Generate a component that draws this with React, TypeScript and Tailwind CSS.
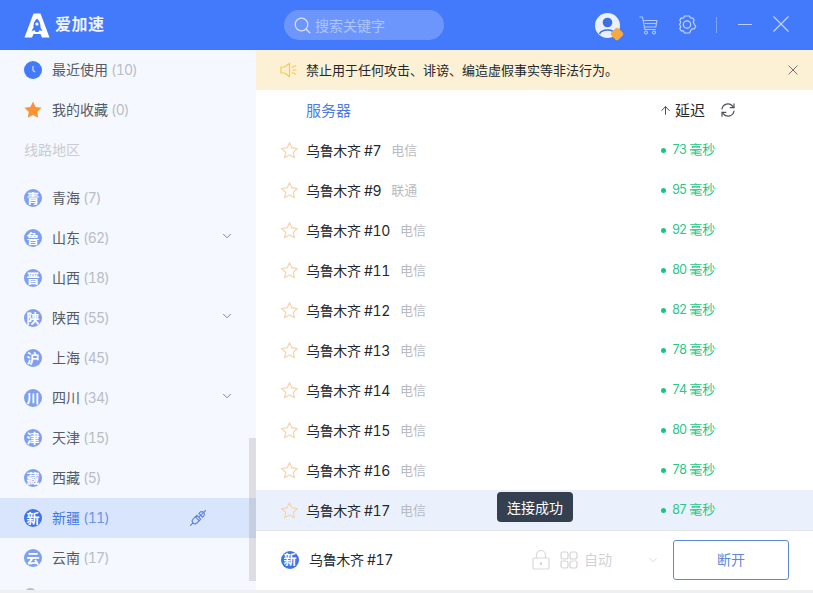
import React from "react";
import { ChevronDown, ArrowUp } from "lucide-react";

const FONT = "font-['Inter','Noto_Sans_CJK_SC',sans-serif]";

function Badge({ ch, active }: { ch: string; active?: boolean }) {
  return (
    <span className={`flex h-[18px] w-[18px] shrink-0 items-center justify-center rounded-full text-[13px] leading-none font-bold text-white ${active ? "bg-[#3f73e8]" : "bg-[#7f9ff0]"}`}>
      {ch}
    </span>
  );
}

function Region({ ch, name, n, chev, active }: { ch: string; name: string; n: number; chev?: boolean; active?: boolean }) {
  return (
    <div className={`flex h-10 items-center pl-6 pr-[22px] ${active ? "bg-[#d9e5fd]" : ""}`}>
      <Badge ch={ch} active={active} />
      <span className={`ml-[10px] -translate-y-px text-[14px] ${active ? "text-[#4277e6]" : "text-[#555b66]"}`}>{name}</span>
      <span className={`ml-[3px] -translate-y-px text-[14px] tabular-nums tracking-[-0.8px] ${active ? "text-[#6d93e8]" : "text-[#b9bdc6]"}`}>({n})</span>
      <div className="flex-1" />
      {chev && <ChevronDown className="h-[14px] w-[14px] -translate-y-[2px] text-[#6c7280]" strokeWidth={1.5} />}
      {active && (
        <svg viewBox="0 0 16 16" className="mr-[28px] h-[16px] w-[16px] text-[#5b83e0]" fill="none" stroke="currentColor" strokeWidth="1.100" strokeLinecap="round">
          <path d="M.500 15.500l2.300-2.300M15.500.500l-2.300 2.300" />
          <path d="M6.800 5.300 3 9.100a2.900 2.900 0 0 0 0 3.900 2.900 2.900 0 0 0 3.900 0l3.800-3.800Z" />
          <path d="M9.200 6.900l3.800-3.800M5.300 6.800 9.200 10.700" />
          <path d="M8.900 3.400l1-1a2.500 2.500 0 0 1 3.700 0 2.500 2.500 0 0 1 0 3.700l-1 1Z" />
        </svg>
      )}
    </div>
  );
}

function Star() {
  return (
    <svg viewBox="0 0 20 20" className="h-[19px] w-[19px] shrink-0" fill="none" stroke="#f6d3a8" strokeWidth="1.2">
      <path d="M10 1.800l2.500 5.400 5.800.700-4.300 4 1.200 5.800L10 14.800l-5.200 2.900L6 11.900l-4.300-4 5.800-.700Z" strokeLinejoin="round" />
    </svg>
  );
}

function Row({ n, isp, ms, active }: { n: number; isp: string; ms: number; active?: boolean }) {
  return (
    <div className={`flex h-10 items-center pl-6 ${active ? "bg-[#eaf1fd]" : ""}`}>
      <Star />
      <span className="ml-[7px] text-[14px] tabular-nums tracking-[-0.35px] text-[#23272e]">乌鲁木齐 #{n}</span>
      <span className="ml-[10px] translate-y-px text-[13px] text-[#b8bbc2]">{isp}</span>
      <div className="flex-1" />
      <div className="flex w-[152px] items-center text-[13px] text-[#2bc78a]">
        <span className="mr-[6px] h-[5px] w-[5px] rounded-full bg-[#17c67f]" />
        <span className="text-[12.500px] tabular-nums tracking-[-1px]">{ms}</span>
        <span className="ml-[3px]">毫秒</span>
      </div>
    </div>
  );
}

const regions = [
  { ch: "青", name: "青海", n: 7 },
  { ch: "鲁", name: "山东", n: 62, chev: true },
  { ch: "晋", name: "山西", n: 18 },
  { ch: "陕", name: "陕西", n: 55, chev: true },
  { ch: "沪", name: "上海", n: 45 },
  { ch: "川", name: "四川", n: 34, chev: true },
  { ch: "津", name: "天津", n: 15 },
  { ch: "藏", name: "西藏", n: 5 },
  { ch: "新", name: "新疆", n: 11, active: true },
  { ch: "云", name: "云南", n: 17 },
];

const rows = [
  { n: 7, isp: "电信", ms: 73 },
  { n: 9, isp: "联通", ms: 95 },
  { n: 10, isp: "电信", ms: 92 },
  { n: 11, isp: "电信", ms: 80 },
  { n: 12, isp: "电信", ms: 82 },
  { n: 13, isp: "电信", ms: 78 },
  { n: 14, isp: "电信", ms: 74 },
  { n: 15, isp: "电信", ms: 80 },
  { n: 16, isp: "电信", ms: 78 },
  { n: 17, isp: "电信", ms: 87, active: true },
];

export default function App() {
  return (
    <div className={`flex h-[593px] w-[813px] flex-col overflow-hidden bg-[#eeeff1] ${FONT}`}>
      {/* header */}
      <header className="flex h-[50px] shrink-0 items-center bg-[#437afc] text-white">
        <div className="flex w-[284px] items-center pl-6">
          <svg viewBox="0 0 26 25" className="h-[25px] w-[26px]">
            <path fill="white" d="M9.500.5h7L25.500 24.500h-7.500L16.500 21h-7L8 24.500H.5Z" />
            <path fill="#437afc" d="M13 5.500c2.800 2.500 3.800 6 3.500 9l2 3.500-3.300-.800L14.500 19h-3l-.700-1.800L7.500 18l2-3.500c-.300-3 .700-6.500 3.500-9Z" />
            <circle cx="13" cy="11" r="1.600" fill="white" />
          </svg>
          <span className="ml-[5px] -translate-y-px text-[16px] font-bold tracking-[0.5px] text-[#eef3ff]">爱加速</span>
        </div>
        <div className="flex h-[30px] w-[160px] items-center rounded-full bg-[#6c96fc] pl-[10px]">
          <svg viewBox="0 0 17 17" className="h-[17px] w-[17px]" fill="none" stroke="#d5e1ff" strokeWidth="1.300" strokeLinecap="round">
            <circle cx="7.500" cy="7.500" r="6.300" />
            <path d="M12.200 12.200 15.800 15.800" />
          </svg>
          <span className="ml-[4px] text-[14px] text-[#aec5fe]">搜索关键字</span>
        </div>
        <div className="flex-1" />
        <div className="relative h-[25px] w-[25px] rounded-full bg-[#eaf0fe]">
          <svg viewBox="0 0 25 25" className="h-[25px] w-[25px]">
            <circle cx="12.500" cy="9.500" r="4.800" fill="#3f6fe0" />
            <path d="M4.500 21c2-5.500 14-5.500 16 0" fill="none" stroke="#3f6fe0" strokeWidth="1.500" />
          </svg>
          <span className="absolute -bottom-[1px] -right-[2px] h-[10px] w-[10px] rotate-45 rounded-[2px] bg-[#f7a941]" />
        </div>
        <svg viewBox="0 0 19 19" className="ml-[19px] h-[19px] w-[19px]" fill="none" stroke="#b3c9fe" strokeWidth="1.100" strokeLinejoin="round">
          <path d="M.5 1h3l2.300 12.500h11" />
          <path d="M4 4.500h14l-1.200 6.500H5.200" />
          <path d="M5.500 7.500h12" />
          <circle cx="7" cy="16.500" r="1.500" />
          <circle cx="15" cy="16.500" r="1.500" />
        </svg>
        <svg viewBox="0 0 20 20" className="ml-[19px] h-[20px] w-[20px]" fill="none" stroke="#c3d4fe" strokeWidth="1.200" strokeLinejoin="round">
          <path d="M7.500 1.500h5l1 2 2.400.200 1.300 2-1 2L17.500 10l1.200 2-1.300 2.300-2.400.1-1.500 2-1 2.100h-5l-1-2.100-2.400-.1L2.800 14l1-2L2.500 10l1.300-2.300-1-2 1.300-2 2.400-.2Z" transform="translate(0 -.500)" />
          <circle cx="10" cy="9.500" r="3.700" />
        </svg>
        <span className="ml-[19px] h-[16px] w-px bg-[#7fa4fc]" />
        <span className="ml-[21px] mb-[2px] h-px w-[14px] bg-[#b9cffe]" />
        <svg viewBox="0 0 16 16" className="ml-[21px] mr-[24px] h-[16px] w-[16px] -translate-y-[1px]" fill="none" stroke="#c6d7fe" strokeWidth="1.100">
          <path d="M.5.500l15 15M15.500.500l-15 15" />
        </svg>
      </header>

      <div className="flex h-[540px] shrink-0">
        {/* sidebar */}
        <aside className="relative w-[256px] shrink-0 overflow-hidden bg-[#f5f8fe]">
          <div className="flex h-10 items-center pl-6">
            <span className="flex h-[18px] w-[18px] items-center justify-center rounded-full bg-[#437afc]">
              <svg viewBox="0 0 18 18" className="h-[18px] w-[18px]" fill="none" stroke="#cfdcff" strokeWidth="1.200">
                <path d="M9 5v4.500l2 1.500" />
              </svg>
            </span>
            <span className="ml-[10px] -translate-y-px text-[14px] text-[#555b66]">最近使用</span>
            <span className="ml-[3px] -translate-y-px text-[14px] tabular-nums tracking-[-0.8px] text-[#b9bdc6]">(10)</span>
          </div>
          <div className="flex h-10 items-center pl-6">
            <svg viewBox="0 0 18 18" className="h-[18px] w-[18px]" fill="#fb9334">
              <path d="M9 .500l2.600 5.500 6 .800-4.400 4.100 1.100 5.900L9 13.900l-5.300 2.900 1.100-5.900L.400 6.800l6-.800Z" />
            </svg>
            <span className="ml-[10px] -translate-y-px text-[14px] text-[#555b66]">我的收藏</span>
            <span className="ml-[3px] -translate-y-px text-[14px] tabular-nums tracking-[-0.8px] text-[#b9bdc6]">(0)</span>
          </div>
          <div className="flex h-10 -translate-y-px items-center pl-6 text-[14px] text-[#c9ccd3]">线路地区</div>
          <div className="h-2" />
          {regions.map((r) => (
            <Region key={r.name} {...r} />
          ))}
          <div className="pl-6 pt-[10px]">
            <span className="block h-[18px] w-[13px] rounded-full bg-[#b9bdc6]" />
          </div>
          <div className="absolute right-0 top-[388px] h-[143px] w-[7px] bg-[#777]/20" />
        </aside>

        {/* main */}
        <main className="flex min-w-0 flex-1 flex-col bg-white">
          <div className="flex h-10 items-center bg-[#fdf1d5] pl-6 pr-[14px]">
            <svg viewBox="0 0 18 16" className="h-[16px] w-[18px] shrink-0" fill="none" stroke="#f9c84e" strokeWidth="1.200">
              <path d="M1 5h3.500L9.500 1.500v13L4.500 11H1ZM12 5.500l4-2M12.500 8h4M12 10.500l4 2" />
            </svg>
            <span className="ml-[8px] translate-y-px text-[13px] text-[#23272e]">禁止用于任何攻击、诽谤、编造虚假事实等非法行为。</span>
            <div className="flex-1" />
            <svg viewBox="0 0 10 10" className="h-[10px] w-[10px]" fill="none" stroke="#6f7378" strokeWidth="1">
              <path d="M.5.500l9 9M9.500.500l-9 9" />
            </svg>
            <span className="w-[1px]" />
          </div>
          <div className="flex h-10 items-center pl-[50px]">
            <span className="translate-y-px text-[15px] text-[#4b7de3]">服务器</span>
            <div className="flex-1" />
            <div className="flex w-[154px] items-center text-[#23272e]">
              <ArrowUp className="h-[13px] w-[13px]" strokeWidth={1.500} />
              <span className="ml-[3px] translate-y-px text-[15px]">延迟</span>
              <svg viewBox="0 0 16 16" className="ml-[15px] h-[16px] w-[16px]" fill="none" stroke="#4d5158" strokeWidth="1.200" strokeLinecap="round">
                <path d="M2 7a6 6 0 0 1 10.500-3l1.300 1.600M14 9a6 6 0 0 1-10.500 3L2.200 10.400" />
                <path d="M14 1.800v3.800h-3.800M2 14.200v-3.800h3.800" />
              </svg>
            </div>
          </div>
          <div className="relative">
            {rows.map((r) => (
              <Row key={r.n} {...r} />
            ))}
            <div className="absolute left-[241px] top-[362px] flex h-[30px] items-center rounded-[4px] bg-[#343f50] px-[10px] text-[14px] text-white">
              连接成功
            </div>
          </div>
          <div className="flex flex-1 items-center border-t border-[#e3e5ea] pb-[2px] pl-[25px] pr-6">
            <Badge ch="新" active />
            <span className="ml-[10px] text-[14px] tabular-nums tracking-[-0.35px] text-[#23272e]">乌鲁木齐 #17</span>
            <div className="flex-1" />
            <svg viewBox="0 0 18 20" className="h-[20px] w-[18px]" fill="none" stroke="#d9d9d9" strokeWidth="1.200">
              <rect x="1" y="8" width="16" height="11" rx="1" />
              <path d="M4.500 8V5a4.500 4.500 0 0 1 9 0v3" />
              <path d="M9 12v3" strokeWidth="2" />
            </svg>
            <svg viewBox="0 0 18 18" className="ml-[10px] h-[18px] w-[18px]" fill="none" stroke="#d4d4d4" strokeWidth="1.200">
              <rect x="1" y="1" width="7" height="7" rx="2" />
              <rect x="10" y="1" width="7" height="7" rx="2" />
              <rect x="1" y="10" width="7" height="7" rx="2" />
              <rect x="10" y="10" width="7" height="7" rx="2" />
            </svg>
            <span className="ml-[6px] text-[14px] text-[#d0d2d6]">自动</span>
            <ChevronDown className="ml-[34px] h-[14px] w-[14px] text-[#d0d2d6]" strokeWidth={1.300} />
            <button className="ml-[13px] flex h-10 w-[116px] items-center justify-center rounded-[3px] border border-[#5f87dc] text-[14px] text-[#5f87dc]">
              断开
            </button>
          </div>
        </main>
      </div>
    </div>
  );
}
